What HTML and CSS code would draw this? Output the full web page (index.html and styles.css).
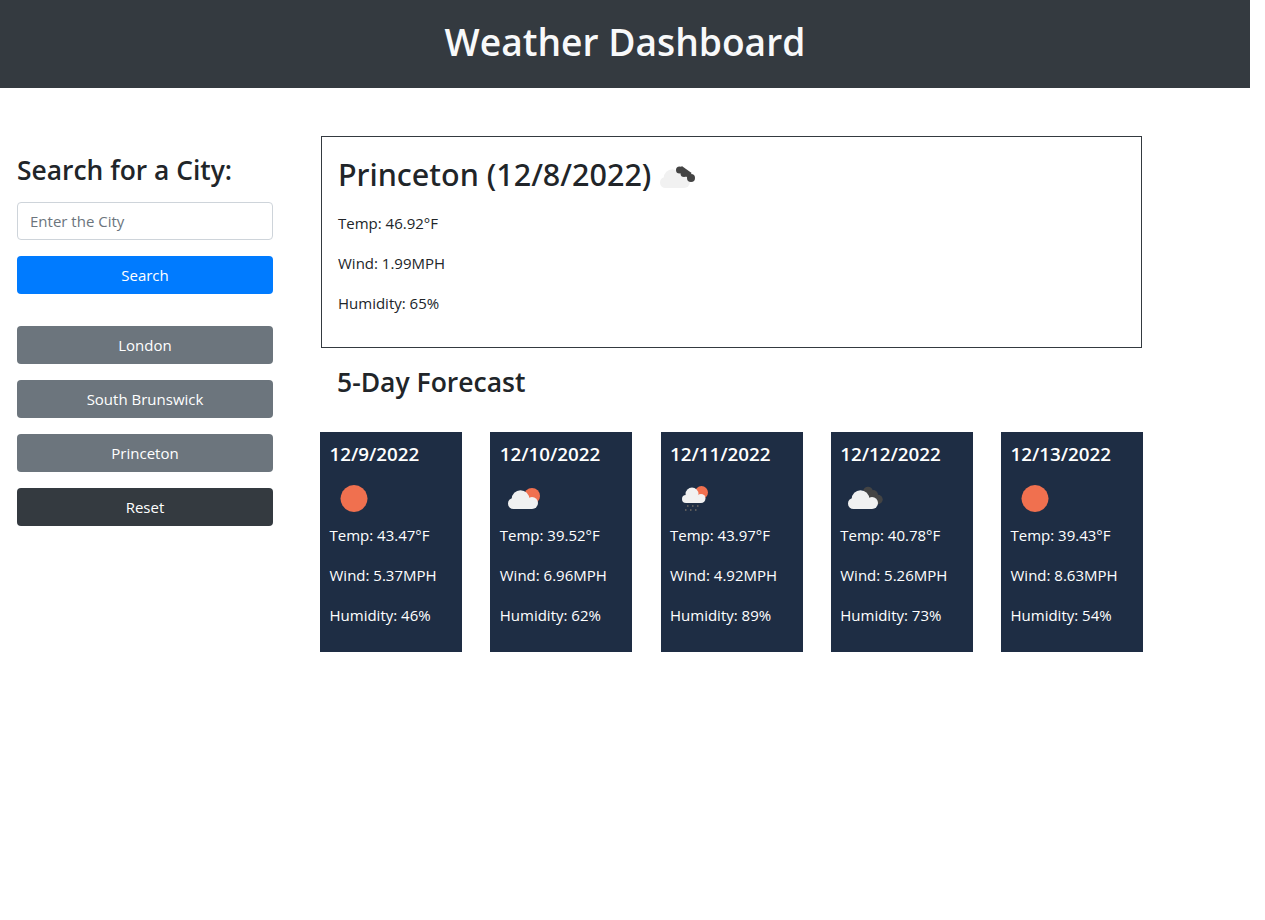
FILE: index.html
```html
<!DOCTYPE html>
<html lang="en">
<head>
  <meta charset="UTF-8">
  <title>Weather Dashboard</title>
  <link rel="stylesheet" href="styles.css">
</head>
<body>
  <svg class="icon-defs" aria-hidden="true">
    <symbol id="cloud" viewBox="0 0 50 50">
      <circle cx="13.500" cy="30.500" r="5.500"/>
      <circle cx="20.500" cy="26" r="8.800"/>
      <circle cx="32" cy="30" r="6"/>
      <rect x="13.500" y="28" width="18.500" height="8"/>
    </symbol>
    <symbol id="icon-sun" viewBox="0 0 50 50">
      <path d="M24 12 l4.500 .8 4 2.400 3 3.400 1.500 3.900 .5 3 -.5 3.500 -1.500 3.500 -3 3.400 -4 2.400 -4.500 .7 -4.500 -.7 -4 -2.400 -3 -3.400 -1.500 -3.500 -.5 -3.500 .5 -3 1.500 -3.900 3 -3.400 4 -2.400z" fill="#f0704f"/>
    </symbol>
    <symbol id="icon-few" viewBox="0 0 50 50">
      <circle cx="32" cy="23" r="8" fill="#f0704f"/>
      <use href="#cloud" fill="#f1f1f1"/>
    </symbol>
    <symbol id="icon-rain" viewBox="0 0 50 50">
      <circle cx="31.500" cy="19.500" r="6.500" fill="#f0704f"/>
      <g fill="#f1f1f1">
        <circle cx="16" cy="26" r="4"/>
        <circle cx="22" cy="21" r="6.500"/>
        <circle cx="31" cy="25.500" r="4.500"/>
        <rect x="16" y="24" width="15" height="6"/>
      </g>
      <g fill="#5c5c5c">
        <rect x="17" y="32" width="1.500" height="2"/>
        <rect x="22" y="32" width="1.500" height="2"/>
        <rect x="27" y="32" width="1.500" height="2"/>
        <rect x="15" y="36" width="1.500" height="2"/>
        <rect x="20" y="36" width="1.500" height="2"/>
        <rect x="25" y="36" width="1.500" height="2"/>
      </g>
    </symbol>
    <symbol id="icon-broken" viewBox="0 0 50 50">
      <g fill="#444">
        <circle cx="28" cy="18.500" r="4.800"/>
        <circle cx="33" cy="22" r="5"/>
        <circle cx="38" cy="26.500" r="4.700"/>
      </g>
      <use href="#cloud" fill="#f1f1f1"/>
    </symbol>
    <symbol id="icon-broken-main" viewBox="0 0 50 50">
      <use href="#cloud" fill="#f1f1f1"/>
      <g fill="#444">
        <circle cx="27.500" cy="18" r="3.500"/>
        <circle cx="32" cy="21.500" r="3.500"/>
        <circle cx="39" cy="26" r="4"/>
        <rect x="27" y="17" width="12" height="6" transform="rotate(35 33 20)"/>
      </g>
    </symbol>
  </svg>

  <header class="page-header">
    <h1>Weather Dashboard</h1>
  </header>

  <div class="layout">
    <aside class="sidebar">
      <h3>Search for a City:</h3>
      <input class="city-input" type="text" placeholder="Enter the City">
      <button class="btn btn-search">Search</button>
      <div class="history">
        <button class="btn btn-city">London</button>
        <button class="btn btn-city">South Brunswick</button>
        <button class="btn btn-city">Princeton</button>
        <button class="btn btn-reset">Reset</button>
      </div>
    </aside>

    <main class="main">
      <section class="current">
        <h2>Princeton (12/8/2022)<svg class="current-icon"><use href="#icon-broken-main"/></svg></h2>
        <p>Temp: 46.92°F</p>
        <p>Wind: 1.99MPH</p>
        <p>Humidity: 65%</p>
      </section>

      <h3 class="forecast-title">5-Day Forecast</h3>

      <div class="forecast">
        <div class="day">
          <h4>12/9/2022</h4>
          <svg class="day-icon"><use href="#icon-sun"/></svg>
          <p>Temp: 43.47°F</p>
          <p>Wind: 5.37MPH</p>
          <p>Humidity: 46%</p>
        </div>
        <div class="day">
          <h4>12/10/2022</h4>
          <svg class="day-icon"><use href="#icon-few"/></svg>
          <p>Temp: 39.52°F</p>
          <p>Wind: 6.96MPH</p>
          <p>Humidity: 62%</p>
        </div>
        <div class="day">
          <h4>12/11/2022</h4>
          <svg class="day-icon"><use href="#icon-rain"/></svg>
          <p>Temp: 43.97°F</p>
          <p>Wind: 4.92MPH</p>
          <p>Humidity: 89%</p>
        </div>
        <div class="day">
          <h4>12/12/2022</h4>
          <svg class="day-icon"><use href="#icon-broken"/></svg>
          <p>Temp: 40.78°F</p>
          <p>Wind: 5.26MPH</p>
          <p>Humidity: 73%</p>
        </div>
        <div class="day">
          <h4>12/13/2022</h4>
          <svg class="day-icon"><use href="#icon-sun"/></svg>
          <p>Temp: 39.43°F</p>
          <p>Wind: 8.63MPH</p>
          <p>Humidity: 54%</p>
        </div>
      </div>
    </main>
  </div>
</body>
</html>
```

FILE: styles.css
```css
* {
  box-sizing: border-box;
}

body {
  margin: 0;
  width: 1250px;
  font-family: "Open Sans", "Noto Sans", sans-serif;
  font-size: 15px;
  line-height: 24px;
  color: #212529;
  background-color: #fff;
}

.icon-defs {
  display: none;
}

h1, h2, h3, h4, p {
  margin: 0;
}

.page-header {
  height: 88px;
  padding-bottom: 4px;
  background-color: #343a40;
  color: #f8f9fa;
  display: flex;
  align-items: center;
  justify-content: center;
}

.page-header h1 {
  font-size: 37.200px;
  font-weight: 600;
  line-height: 46px;
}

.layout {
  display: flex;
  padding-left: 17px;
}

.sidebar {
  width: 256px;
  padding-top: 65px;
  display: flex;
  flex-direction: column;
}

.sidebar h3 {
  font-size: 26.400px;
  font-weight: 600;
  line-height: 34px;
  margin-bottom: 15px;
}

.city-input {
  height: 38px;
  padding: 6px 12px;
  border: 1px solid #ced4da;
  border-radius: 4px;
  font: inherit;
  margin-bottom: 16px;
}

.city-input::placeholder {
  color: #6c757d;
}

.btn {
  display: block;
  width: 100%;
  height: 38px;
  border: none;
  border-radius: 4px;
  color: #fff;
  font: inherit;
  text-align: center;
  cursor: pointer;
}

.btn-search {
  background-color: #007bff;
}

.history {
  margin-top: 32px;
  display: flex;
  flex-direction: column;
  gap: 16px;
}

.btn-city {
  background-color: #6c757d;
}

.btn-reset {
  background-color: #343a40;
}

.main {
  width: 823px;
  margin-left: 47px;
  padding-top: 48px;
}

.current {
  width: 821px;
  height: 212px;
  margin-left: 1px;
  padding: 15px 16px 16px;
  border: 1px solid #343a40;
}

.current h2 {
  font-family: "Noto Sans", "Open Sans", sans-serif;
  font-size: 30.500px;
  font-weight: 500;
  line-height: 44px;
  margin-bottom: 15px;
  display: flex;
  align-items: center;
}

.current-icon {
  width: 50px;
  height: 50px;
  margin: 0 0 -6px 1px;
}

.current p {
  margin-bottom: 16px;
}

.forecast-title {
  font-size: 26.500px;
  font-weight: 600;
  line-height: 34px;
  margin: 17px 0 33px 17px;
}

.forecast {
  display: flex;
  justify-content: space-between;
}

.day {
  width: 142px;
  height: 220px;
  padding: 10px 10px 10px 9.500px;
  background-color: #1e2d44;
  color: #fff;
}

.day h4 {
  font-size: 18.800px;
  font-weight: 600;
  line-height: 24px;
  height: 31px;
}

.day-icon {
  display: block;
  width: 50px;
  height: 50px;
}

.day p {
  margin-bottom: 16px;
}
```
